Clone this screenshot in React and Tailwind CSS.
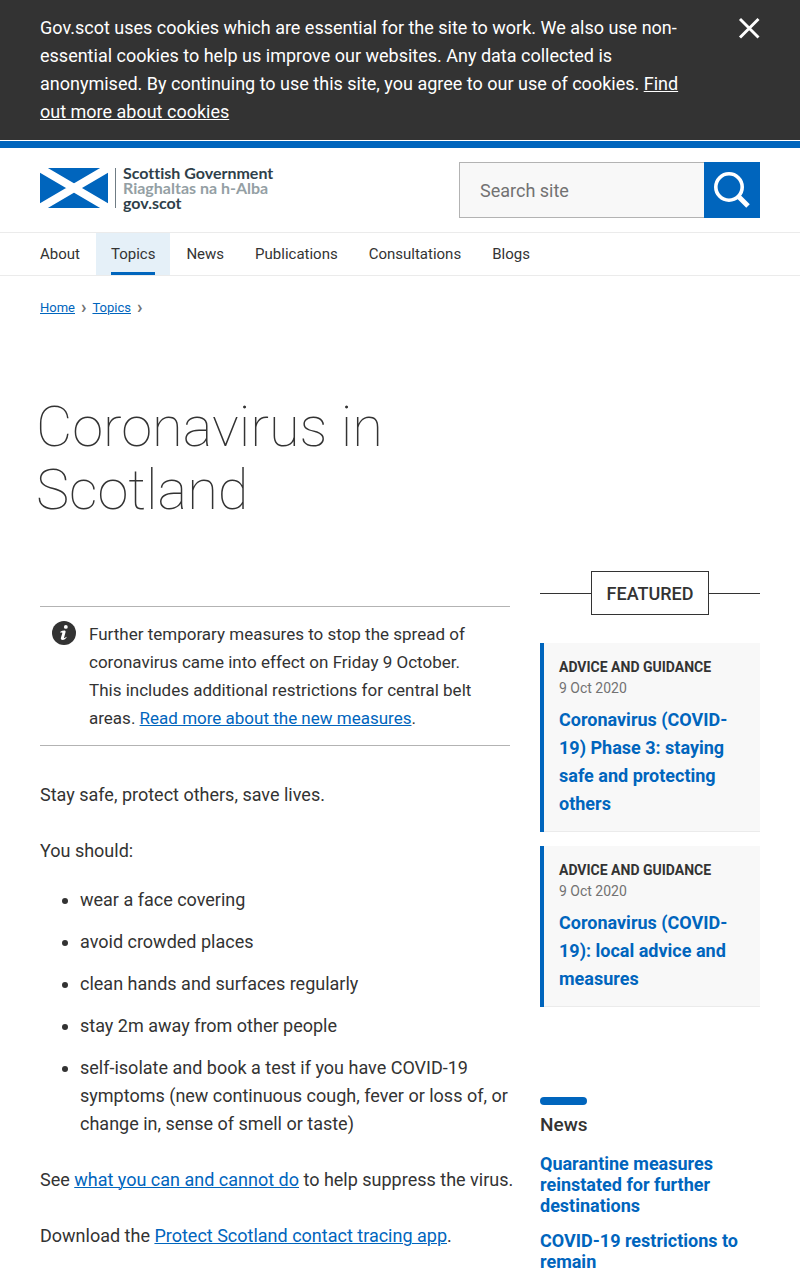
const link = 'text-[#0065bd] underline underline-offset-1 decoration-1';

const navItems = ['About', 'Topics', 'News', 'Publications', 'Consultations', 'Blogs'];

const tips = [
  'wear a face covering',
  'avoid crowded places',
  'clean hands and surfaces regularly',
  'stay 2m away from other people',
  'self-isolate and book a test if you have COVID-19 symptoms (new continuous cough, fever or loss of, or change in, sense of smell or taste)',
];

const featured = [
  'Coronavirus (COVID-19) Phase 3: staying safe and protecting others',
  'Coronavirus (COVID-19): local advice and measures',
];

const news = [
  'Quarantine measures reinstated for further destinations',
  'COVID-19 restrictions to remain',
];

function CookieNotice() {
  return (
    <div className="flex items-start justify-between bg-[#333333] px-10 py-3.5 text-lg leading-7 text-white">
      <p className="max-w-[640px]">
        Gov.scot uses cookies which are essential for the site to work. We also use non-essential
        cookies to help us improve our websites. Any data collected is anonymised. By continuing to
        use this site, you agree to our use of cookies.{' '}
        <a href="#cookies" className="underline underline-offset-1 decoration-1">
          Find out more about cookies
        </a>
      </p>
      <button type="button" aria-label="Close" className="flex h-7 items-center">
        <svg width="22" height="22" viewBox="0 0 22 22" fill="none" stroke="#fff" strokeWidth="2.9">
          <path d="M2 2 20.5 20.5M20.5 2 2 20.5" />
        </svg>
      </button>
    </div>
  );
}

function Logo() {
  return (
    <a href="#home" className="flex items-start pt-1.5">
      <svg width="68" height="40" viewBox="0 0 68 40" aria-hidden="true">
        <rect width="68" height="40" fill="#0065bd" />
        <path d="M0 0 68 40M68 0 0 40" stroke="#fff" strokeWidth="8" />
      </svg>
      <span className="ml-[7px] h-10 w-px bg-[#6f7c84]" />
      <span className="-mt-[3px] ml-[7px] flex flex-col whitespace-nowrap font-['Lato',sans-serif] text-base font-bold leading-[15px] text-[#2f3f4a] [font-variant-ligatures:none]">
        <span>Scottish Government</span>
        <span className="text-[#949fa4]">Riaghaltas na h-Alba</span>
        <span>gov.scot</span>
      </span>
    </a>
  );
}

function Search() {
  return (
    <form className="flex h-14 w-[301px]" role="search">
      <input
        type="search"
        aria-label="Search site"
        placeholder="Search site"
        className="min-w-0 flex-1 border border-r-0 border-[#b3b3b3] bg-[#f8f8f8] px-5 pt-0.5 text-lg text-[#333333] placeholder:text-[#727272]"
      />
      <button type="submit" aria-label="Search" className="w-14 bg-[#0065bd]">
        <svg width="56" height="56" viewBox="0 0 56 56" fill="none" stroke="#fff">
          <circle cx="25" cy="25" r="13.2" strokeWidth="3.6" />
          <path d="M34 34 44 44" strokeWidth="5" />
        </svg>
      </button>
    </form>
  );
}

function Callout() {
  return (
    <div className="flex border-y border-[#b3b3b3] py-[13px] pl-3 pr-8 text-[17px] leading-7">
      <svg width="24" height="24" viewBox="0 0 25 25" className="mr-[13px] mt-px shrink-0" aria-hidden="true">
        <circle cx="12.5" cy="12.5" r="12.5" fill="#333" />
        <circle cx="14.4" cy="6.2" r="2" fill="#fff" />
        <path
          d="M8.7 11.2c1.2-.7 2.5-1.2 4-1.2 1.3 0 1.7.7 1.4 1.8l-1.5 5.3c-.2.7.1.8.6.6.6-.2 1.1-.7 1.6-1.3l.5.5c-1 1.700-2.500 2.900-4.300 2.900-1.600 0-2.100-.9-1.700-2.300l1.400-4.800c.2-.8-.1-.9-.7-.8l-1.200.3z"
          fill="#fff"
        />
      </svg>
      <p>
        Further temporary measures to stop the spread of coronavirus came into effect on Friday 9
        October. This includes additional restrictions for central belt areas.{' '}
        <a href="#measures" className={link}>
          Read more about the new measures
        </a>
        .
      </p>
    </div>
  );
}

function Sidebar() {
  return (
    <aside>
      <div className="flex items-center">
        <span className="h-px flex-1 bg-[#333333]" />
        <h2 className="border border-[#333333] px-[15px] pb-1.5 pt-2 text-lg font-medium leading-7">
          FEATURED
        </h2>
        <span className="h-px flex-1 bg-[#333333]" />
      </div>
      <div className="mt-7 flex flex-col gap-3.5">
        {featured.map((title) => (
          <article key={title} className="flex bg-[#f8f8f8]">
            <div className="w-1 shrink-0 bg-[#0065bd]" />
            <div className="flex-1 border-b border-[#ebebeb] px-[15px] pb-[13px] pt-3.5">
              <p className="text-sm font-bold leading-[21px]">ADVICE AND GUIDANCE</p>
              <p className="text-sm leading-[21px] text-[#727272]">9 Oct 2020</p>
              <h3 className="mt-[7px] text-lg font-bold leading-7">
                <a href="#featured" className="text-[#0065bd]">
                  {title}
                </a>
              </h3>
            </div>
          </article>
        ))}
      </div>
      <section className="mt-[90px]">
        <div className="h-2 w-[47px] rounded bg-[#0065bd]" />
        <h2 className="mt-1.5 text-[19px] font-medium leading-7">News</h2>
        <ul className="mt-3.5 flex flex-col gap-3.5 text-lg font-bold leading-[21px]">
          {news.map((title) => (
            <li key={title}>
              <a href="#news" className="text-[#0065bd]">
                {title}
              </a>
            </li>
          ))}
        </ul>
      </section>
    </aside>
  );
}

export default function App() {
  return (
    <div className="bg-white font-['Roboto',sans-serif] text-[#333333]">
      <CookieNotice />
      <header className="mt-px border-t-[7px] border-[#0065bd]">
        <div className="flex items-start justify-between px-10 py-3.5">
          <Logo />
          <Search />
        </div>
        <nav className="flex gap-px border-y border-[#ebebeb] px-[25px] text-[15px] leading-[42px]">
          {navItems.map((item) => (
            <a
              key={item}
              href={'#' + item.toLowerCase()}
              className={item === 'Topics' ? 'bg-[#e5f0f8] px-[15px]' : 'px-[15px]'}
            >
              <span className={item === 'Topics' ? 'block h-[42px] border-b-3 border-[#0065bd]' : 'block'}>
                {item}
              </span>
            </a>
          ))}
        </nav>
      </header>
      <main className="px-10 pb-2">
        <nav aria-label="Breadcrumb" className="flex gap-1.5 pt-[21px] text-[13px] leading-[21px]">
          <a href="#home" className={link}>
            Home
          </a>
          <span className="text-lg font-bold leading-[19px] text-[#727272]">›</span>
          <a href="#topics" className={link}>
            Topics
          </a>
          <span className="text-lg font-bold leading-[19px] text-[#727272]">›</span>
        </nav>
        <h1 className="-ml-1 mt-[78px] max-w-[470px] text-[56px] font-thin leading-[63px]">
          Coronavirus in Scotland
        </h1>
        <div className="mt-[49px] grid grid-cols-[minmax(0,1fr)_220px] gap-[30px]">
          <div className="pt-[35px] text-lg leading-7">
            <Callout />
            <p className="mt-[35px]">Stay safe, protect others, save lives.</p>
            <p className="mt-7">You should:</p>
            <ul className="mt-[21px] flex list-disc flex-col gap-3.5 pl-10">
              {tips.map((tip) => (
                <li key={tip}>{tip}</li>
              ))}
            </ul>
            <p className="-mr-4 mt-7">
              See{' '}
              <a href="#guidance" className={link}>
                what you can and cannot do
              </a>{' '}
              to help suppress the virus.
            </p>
            <p className="mt-7">
              Download the{' '}
              <a href="#app" className={link}>
                Protect Scotland contact tracing app
              </a>
              .
            </p>
          </div>
          <Sidebar />
        </div>
      </main>
    </div>
  );
}
